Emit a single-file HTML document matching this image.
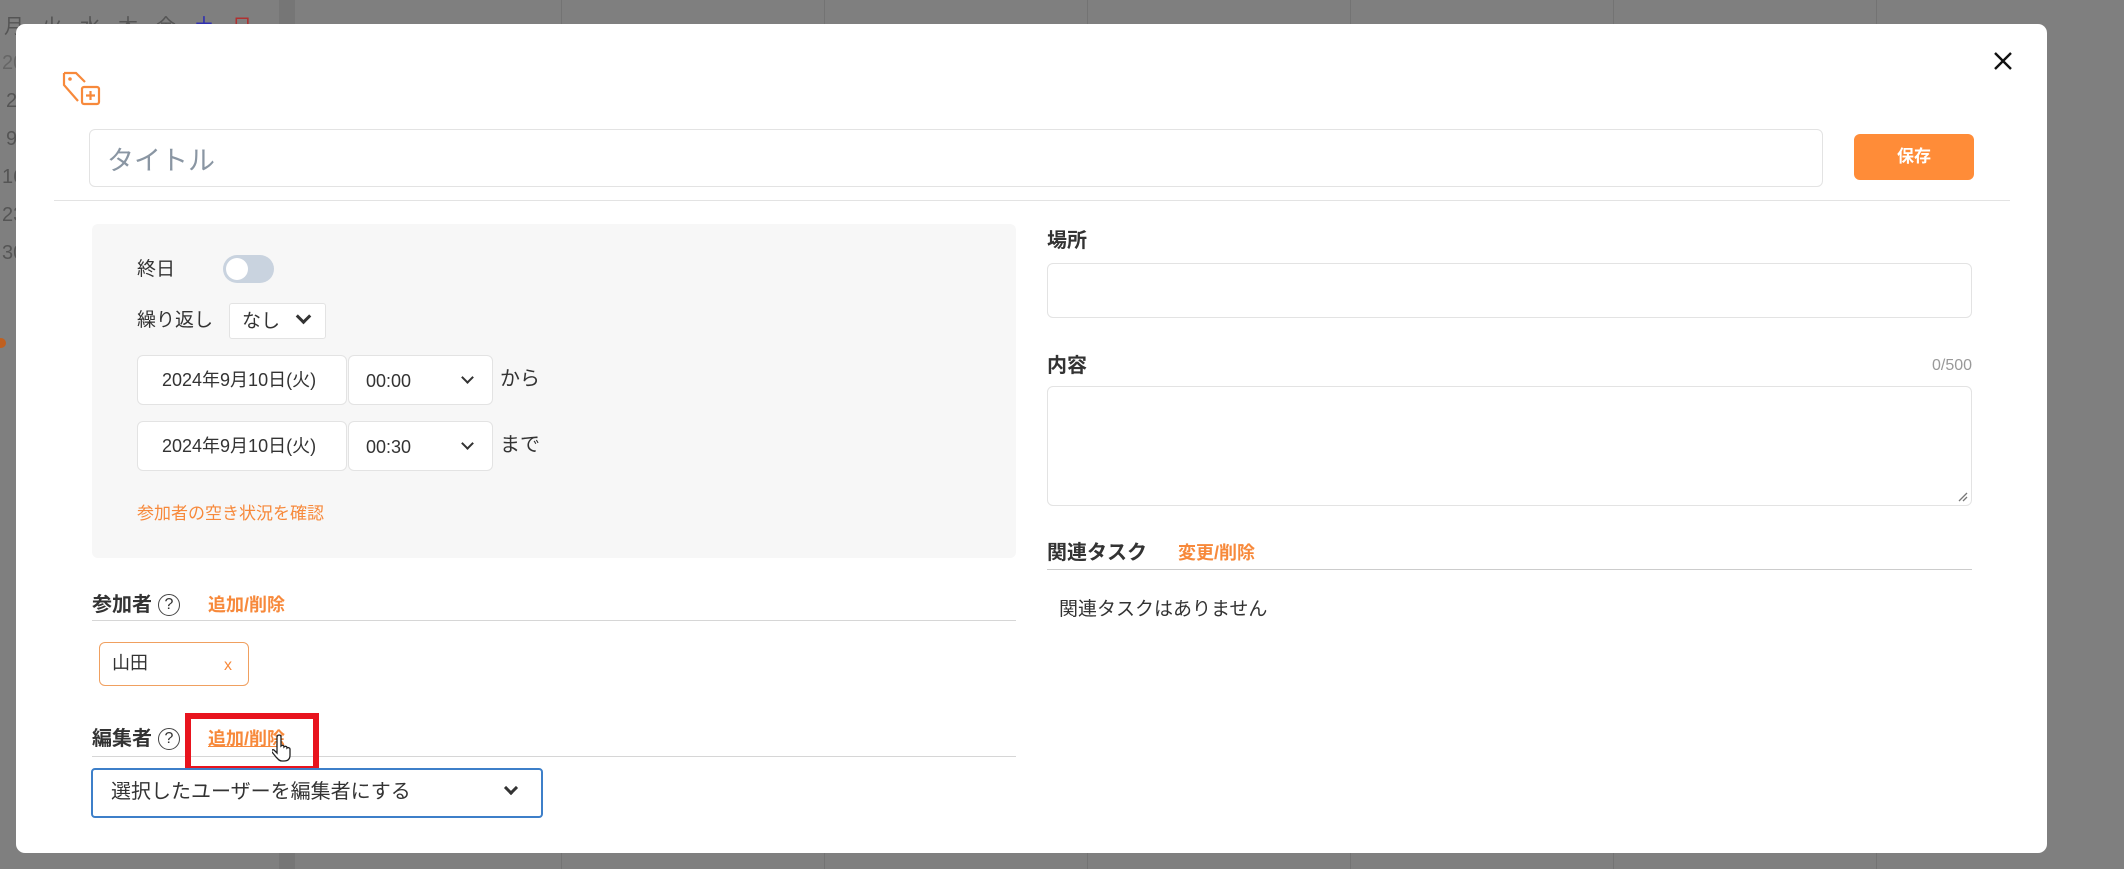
<!DOCTYPE html>
<html><head><meta charset="utf-8"><style>
*{box-sizing:border-box;margin:0;padding:0}
body{width:2124px;height:869px;overflow:hidden;background:#7f7f7f;font-family:"Liberation Sans","Noto Sans CJK JP",sans-serif;color:#333;position:relative}
.a{position:absolute}
.bgt{color:#555;font-size:20px}
.vl{position:absolute;top:0;height:869px;width:1px;background:#737373}
.modal{position:absolute;left:16px;top:24px;width:2031px;height:829px;background:#fff;border-radius:9px}
.inp{position:absolute;background:#fff;border:1px solid #e3e3e3;border-radius:6px}
.lbl{position:absolute;font-size:20px;font-weight:bold;color:#333;line-height:1}
.or{color:#f7893b;font-weight:bold;font-size:18px}
.t{position:absolute;font-size:19px;line-height:1;color:#333}
.chev{position:absolute;width:11px;height:11px;border-right:3px solid #333;border-bottom:3px solid #333;transform:rotate(45deg)}
.line{position:absolute;height:1px;background:#d6d6d6}
.q{display:inline-block;width:22px;height:22px;border:1.5px solid #444;border-radius:50%;font-size:16px;text-align:center;line-height:20px;font-weight:normal;vertical-align:2px;margin-left:6px}
</style></head><body>
<div class="vl" style="left:279px;width:16px;background:#767676"></div>
<div class="vl" style="left:561px"></div><div class="vl" style="left:824px"></div><div class="vl" style="left:1087px"></div><div class="vl" style="left:1350px"></div><div class="vl" style="left:1613px"></div><div class="vl" style="left:1876px"></div>
<div class="a bgt" style="left:4px;top:10px;letter-spacing:18px">月火水木金<span style="color:#3030b0">土</span><span style="color:#b03030">日</span></div>
<div class="a bgt" style="left:2px;top:52px;color:#666">20</div>
<div class="a bgt" style="left:6px;top:90px">2</div>
<div class="a bgt" style="left:6px;top:128px">9</div>
<div class="a bgt" style="left:2px;top:166px">16</div>
<div class="a bgt" style="left:2px;top:204px">23</div>
<div class="a bgt" style="left:2px;top:242px">30</div>
<div class="a" style="left:-4px;top:338px;width:10px;height:10px;border-radius:50%;background:#c06020"></div>

<div class="modal"></div>
<svg class="a" style="left:60px;top:70px" width="44" height="38" viewBox="0 0 44 38" fill="none" stroke="#f7893b" stroke-width="2.2"><path d="M4 3h12l9 9M4 3v12l14 16"/><circle cx="10" cy="9" r="1.8" fill="#f7893b" stroke="none"/><rect x="22" y="17" width="17" height="17" rx="2"/><path d="M30.5 21v9M26 25.5h9"/></svg>
<svg class="a" style="left:1993px;top:51px" width="20" height="20" viewBox="0 0 20 20" stroke="#111" stroke-width="2.4"><path d="M2 2L18 18M18 2L2 18"/></svg>
<div class="inp" style="left:89px;top:129px;width:1734px;height:58px"></div>
<div class="a" style="left:107px;top:139px;font-size:27px;color:#8a96a3">タイトル</div>
<div class="a" style="left:1854px;top:134px;width:120px;height:46px;background:#ff8c38;border-radius:6px;color:#fff;font-weight:bold;font-size:17px;text-align:center;line-height:46px">保存</div>
<div class="line" style="left:54px;top:200px;width:1956px;background:#e3e3e3"></div>

<div class="a" style="left:92px;top:224px;width:924px;height:334px;background:#f7f7f7;border-radius:6px"></div>
<div class="t" style="left:137px;top:260px">終日</div>
<div class="a" style="left:223px;top:255px;width:51px;height:28px;border-radius:14px;background:#c9d3df"></div>
<div class="a" style="left:226px;top:258px;width:22px;height:22px;border-radius:50%;background:#fff"></div>
<div class="t" style="left:137px;top:311px">繰り返し</div>
<div class="inp" style="left:229px;top:303px;width:97px;height:36px;border-radius:3px"></div>
<div class="t" style="left:242px;top:312px">なし</div>
<div class="chev" style="left:298px;top:311px"></div>
<div class="inp" style="left:137px;top:355px;width:210px;height:50px"></div>
<div class="t" style="left:162px;top:371px;font-size:18px">2024年9月10日(火)</div>
<div class="inp" style="left:348px;top:355px;width:145px;height:50px"></div>
<div class="t" style="left:366px;top:372px;font-size:18px">00:00</div>
<div class="chev" style="left:463px;top:373px;width:9px;height:9px;border-width:2.5px"></div>
<div class="t" style="left:500px;top:369px;font-size:20px">から</div>
<div class="inp" style="left:137px;top:421px;width:210px;height:50px"></div>
<div class="t" style="left:162px;top:437px;font-size:18px">2024年9月10日(火)</div>
<div class="inp" style="left:348px;top:421px;width:145px;height:50px"></div>
<div class="t" style="left:366px;top:438px;font-size:18px">00:30</div>
<div class="chev" style="left:463px;top:439px;width:9px;height:9px;border-width:2.5px"></div>
<div class="t" style="left:500px;top:435px;font-size:20px">まで</div>
<div class="t" style="left:137px;top:505px;font-size:17px;color:#f7893b">参加者の空き状況を確認</div>

<div class="lbl" style="left:92px;top:594px">参加者<span class="q">?</span><span class="or" style="margin-left:28px">追加/削除</span></div>
<div class="line" style="left:92px;top:620px;width:924px"></div>
<div class="a" style="left:99px;top:642px;width:150px;height:44px;border:1px solid #f0a060;border-radius:6px"></div>
<div class="t" style="left:112px;top:654px;font-size:18px">山田</div>
<div class="t" style="left:224px;top:658px;font-size:16px;color:#f7893b">x</div>

<div class="lbl" style="left:92px;top:728px">編集者<span class="q">?</span><span class="or" style="margin-left:28px;text-decoration:underline">追加/削除</span></div>
<div class="line" style="left:92px;top:756px;width:924px"></div>
<div class="a" style="left:185px;top:713px;width:134px;height:59px;border:6px solid #e8141e"></div>
<svg class="a" style="left:272px;top:733px" width="22" height="30" viewBox="0 0 22 30"><path d="M7 2c1.5 0 2 1 2 2v9c1-1 3-1 3 1 1-1 3-1 3 1 1-1 3 0 3 1v6c0 4-2 6-6 6h-2c-3 0-4-2-6-4l-4-5c-1-1 0-3 2-2l3 3V4c0-1 1-2 2-2z" fill="#fff" stroke="#222" stroke-width="1.3"/></svg>
<div class="a" style="left:91px;top:768px;width:452px;height:50px;border:2px solid #3d7fc9;border-radius:4px;background:#fff"></div>
<div class="t" style="left:111px;top:782px;font-size:20px">選択したユーザーを編集者にする</div>
<div class="chev" style="left:506px;top:783px;width:10px;height:10px"></div>

<div class="lbl" style="left:1047px;top:231px">場所</div>
<div class="inp" style="left:1047px;top:263px;width:925px;height:55px"></div>
<div class="lbl" style="left:1047px;top:356px">内容</div>
<div class="t" style="left:1932px;top:358px;font-size:16px;color:#999">0/500</div>
<div class="inp" style="left:1047px;top:386px;width:925px;height:120px"></div>
<svg class="a" style="left:1958px;top:492px" width="10" height="10" stroke="#777" stroke-width="1.3"><path d="M9 1L1 9M9 5L5 9"/></svg>
<div class="lbl" style="left:1047px;top:543px">関連タスク<span class="or" style="margin-left:31px">変更/削除</span></div>
<div class="line" style="left:1047px;top:569px;width:925px;background:#ccc"></div>
<div class="t" style="left:1059px;top:600px;font-size:19px">関連タスクはありません</div>
</body></html>
